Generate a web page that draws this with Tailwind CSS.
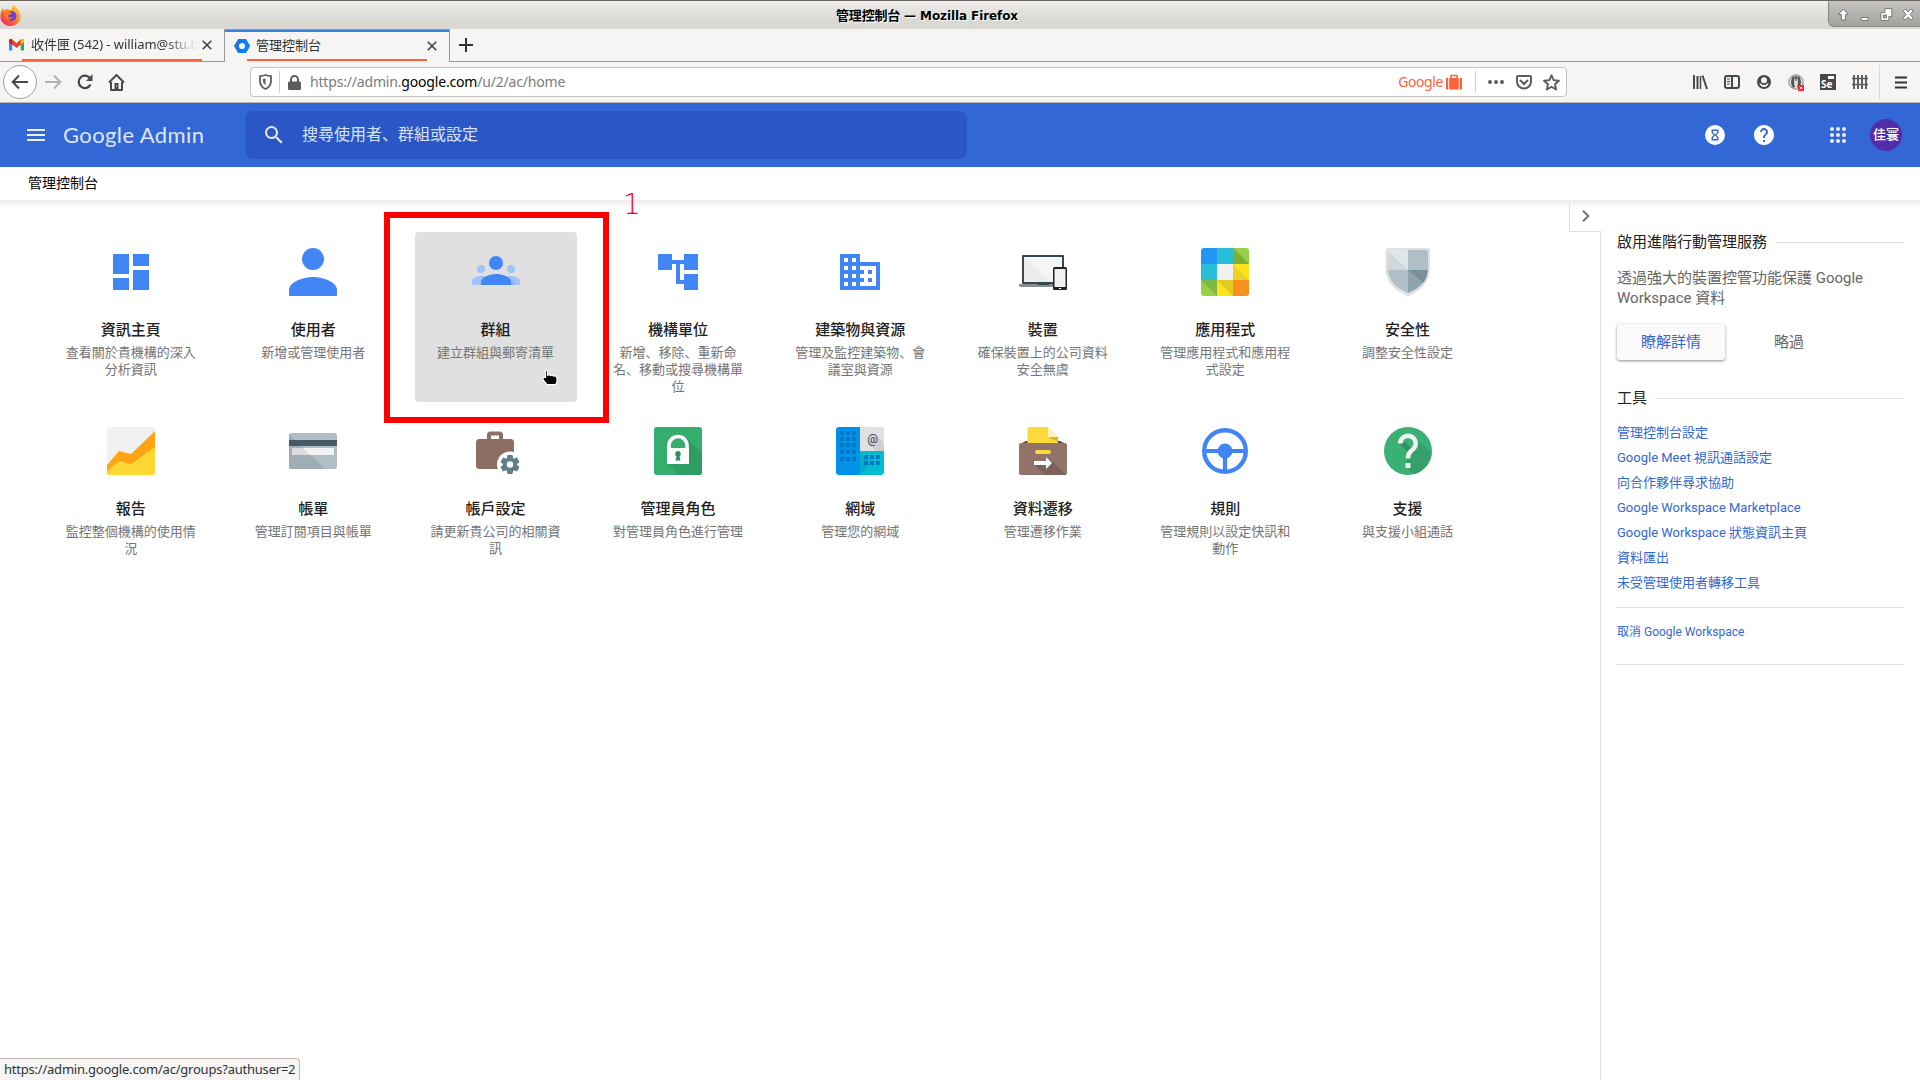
<!DOCTYPE html>
<html>
<head>
<meta charset="utf-8">
<title>管理控制台</title>
<script src="https://cdn.jsdelivr.net/npm/@tailwindcss/browser@4"></script>
</head>
<body class="relative flex h-[1080px] w-[1920px] flex-col overflow-hidden bg-white font-[Roboto,'Noto_Sans_CJK_JP',sans-serif] text-[#212121]">

<!-- Window title bar -->
<div class="flex h-[29px] shrink-0 items-stretch border-t border-[#6c6763] bg-linear-to-b from-[#f0eeec] to-[#d9d8d2] to-70%">
  <svg class="mt-[3px] h-[22px] w-[22px] shrink-0" viewBox="0 0 22 22"><defs><linearGradient id="ff" x1="1" y1="0" x2="0.2" y2="1"><stop offset="0" stop-color="#ffe14a"/><stop offset=".5" stop-color="#ff8a20"/><stop offset="1" stop-color="#f0206a"/></linearGradient></defs><path d="M14 1c1 2 3 3 5 6 3 6 1 10-1 12-4 4-11 4-15 0C0 16 0 11 1 8l2-4 1 3 2-2c2 0 3 1 5 1 1-2 1-4 3-5z" fill="url(#ff)"/><circle cx="11.500" cy="12" r="5" fill="#6c3cd6"/><path d="M5 8c3-1 5 0 7 1-1 2-3 1-4 3 1 2 4 2 5 0 0 4-6 5-8 1-1-2-1-4 0-5z" fill="#ff7a20"/></svg>
  <div class="w-[70px] shrink-0"></div>
  <div class="flex flex-1 items-center justify-center pt-[1px] text-[12px] font-bold text-black [text-shadow:1px_1px_0_#fff] font-['DejaVu_Sans','Noto_Sans_CJK_JP',sans-serif]"><span class="mr-[66px] whitespace-nowrap"><span class="text-[13px] tracking-[-0.2px]">管理控制台</span><span class="tracking-[-0.1px]"> — Mozilla Firefox</span></span></div>
  <div class="flex h-[26px] w-[92px] items-center rounded-bl-md border-b border-l border-[#8a8884] bg-linear-to-b from-[#c5c3bf] to-[#a5a39f] pl-[4px]">
    <svg class="mt-[2px] h-[22px] w-[88px]" viewBox="0 0 88 22" fill="#fff" stroke="#777" stroke-width="1"><path d="M10.500 5l5 5.500h-3v5.500h-4v-5.500h-3z"/><path d="M28.500 13.500h7v3h-7z"/><path d="M52.500 4.500h7v8h-3v4h-8v-8h4zM51 11v3h3v-3z" fill-rule="evenodd"/><path d="M71 7l2-2 3 3 3-3 2 2-3 3.500 3 3.500-2 2-3-3-3 3-2-2 3-3.500z"/></svg>
  </div>
</div>

<!-- Tab strip -->
<div class="flex h-[33px] shrink-0 bg-[#f6f5f3] text-[13px] text-[#2e3436] font-['Noto_Sans','Noto_Sans_CJK_JP',sans-serif]">
  <div class="relative flex w-[224px] items-center border-b border-[#9a9996] pl-[9px]">
    <svg class="h-[12px] w-[15px]" viewBox="0 2 16 12" preserveAspectRatio="none"><path d="M0 3.500v9c0 .6.400 1 1 1h2.500V7z" fill="#4285f4"/><path d="M12.500 7v6.500H15c.6 0 1-.4 1-1v-9z" fill="#34a853"/><path d="M0 4c0-2 2-2.500 3.500-1.400L8 6l4.500-3.400C14 1.500 16 2 16 4v1L8 11 0 5z" fill="#ea4335"/><path d="M12.500 2.600C14 1.500 16 2 16 4v1.200l-3.500 2.600z" fill="#fbbc04"/><path d="M0 4v1.200l3.500 2.600V2.600C2 1.500 0 2 0 4z" fill="#c5221f"/></svg>
    <span class="ml-[7px] w-[166px] overflow-hidden whitespace-nowrap mask-r-from-80%"><span class="tracking-[-0.05px]">收件匣 (542) - william@stu.b</span></span>
    <svg class="ml-[5px] h-[10px] w-[10px]" viewBox="0 0 10 10" stroke="#3f4547" stroke-width="1.600"><path d="M.7.700l8.600 8.600M9.300.700L.7 9.300"/></svg>
    <div class="absolute bottom-0 left-[22px] h-[2px] w-[180px] bg-[#ff6138]"></div>
  </div>
  <div class="relative flex w-[226px] items-center border-x border-t border-[#9a9996] pl-[9px]">
    <div class="absolute inset-x-0 top-0 h-[2px] bg-[#3584e4]"></div>
    <svg class="h-[16px] w-[16px]" viewBox="0 0 16 16"><path d="M4.200 1h7.600L16 8l-4.200 7H4.200L0 8z" fill="#1a73e8"/><path d="M8 1h3.800L16 8l-4.200 7H8z" fill="#0d80ff"/><circle cx="8" cy="8" r="3" fill="#fff"/></svg>
    <span class="ml-[6px] w-[166px]">管理控制台</span>
    <svg class="ml-[5px] h-[10px] w-[10px]" viewBox="0 0 10 10" stroke="#3f4547" stroke-width="1.600"><path d="M.7.700l8.600 8.600M9.300.700L.7 9.300"/></svg>
    <div class="absolute bottom-[1px] left-[22px] h-[2px] w-[180px] bg-[#ff6138]"></div>
  </div>
  <div class="flex flex-1 items-center border-b border-[#9a9996] pl-[9px]">
    <svg class="h-[14px] w-[14px]" viewBox="0 0 14 14" stroke="#2e3436" stroke-width="2"><path d="M7 0v14M0 7h14"/></svg>
  </div>
</div>

<!-- Navigation toolbar -->
<div class="flex h-[41px] shrink-0 items-center border-b border-[#bcb8b1] bg-[#f6f5f3] text-[#45494b] font-['Noto_Sans','Noto_Sans_CJK_JP',sans-serif]">
  <div class="ml-[3px] flex h-[34px] w-[34px] items-center justify-center rounded-full border border-[#a3a19d] bg-white">
    <svg class="h-[16px] w-[18px]" viewBox="0 0 18 16" fill="none" stroke="#45494b" stroke-width="2"><path d="M8 1.500L1.700 8 8 14.500M2 8h15"/></svg>
  </div>
  <svg class="ml-[7px] h-[16px] w-[18px]" viewBox="0 0 18 16" fill="none" stroke="#b3b3b1" stroke-width="2"><path d="M10 1.500L16.300 8 10 14.500M16 8H1"/></svg>
  <svg class="ml-[15px] h-[16px] w-[17px]" viewBox="0 0 17 16" fill="none" stroke="#45494b" stroke-width="2.200"><path d="M13.500 10.500A6.200 6.200 0 1 1 13 4.300"/><path d="M15.500 0v7H9z" fill="#45494b" stroke="none"/></svg>
  <svg class="ml-[14px] h-[17px] w-[17px]" viewBox="0 0 17 17"><path d="M1 8.500L8.500 1 16 8.500M3 8v8h11V8" fill="none" stroke="#45494b" stroke-width="2" stroke-linejoin="round"/><path d="M6.500 9h4v7h-4z" fill="#45494b"/><path d="M8 11.500h1v1H8z" fill="#fff"/></svg>
  <div class="ml-[125px] flex h-[30px] w-[1317px] items-center rounded-[4px] border border-[#c5c1bb] bg-white pr-[6px] text-[14px]">
    <svg class="ml-[8px] h-[16px] w-[13px] shrink-0" viewBox="0 0 13 16" fill="none" stroke="#5c5c5c" stroke-width="1.800"><path d="M1 2.200Q4 2 6.500 1 9 2 12 2.200V7q0 5.500-5.500 8Q1 12.500 1 7z"/><path d="M6.500 4.500v7Q4 9.500 4 7V5z" fill="#5c5c5c" stroke="none"/></svg>
    <div class="ml-[7px] h-[22px] w-px bg-[#cfcfcf]"></div>
    <svg class="ml-[8px] h-[15px] w-[13px]" viewBox="0 0 13 15"><path d="M3 7V4.500a3.500 3.500 0 0 1 7 0V7" fill="none" stroke="#5c5c5c" stroke-width="2"/><rect y="6.500" width="13" height="8.500" rx="1.200" fill="#5c5c5c"/></svg>
    <span class="mb-[2px] ml-[9px] tracking-[-0.18px] whitespace-nowrap text-[#7b7b7b]">https://admin.<span class="text-black">google.com</span>/u/2/ac/home</span>
    <span class="flex-1"></span>
    <span class="mb-[1px] tracking-[-0.4px] text-[#ff6138]">Google</span>
    <svg class="ml-[3px] h-[16px] w-[16px]" viewBox="0 0 16 16" fill="#ff6138"><path d="M0 4h2.200v11.500H0zM3.200 4h9.600v11.500H3.200zM13.800 4H16v11.500h-2.200z"/><path d="M5 4V1.500h6V4" fill="none" stroke="#ff6138" stroke-width="1.500"/></svg>
    <div class="ml-[13px] h-[22px] w-px bg-[#cfcfcf]"></div>
    <svg class="ml-[12px] h-[4px] w-[16px]" viewBox="0 0 16 4" fill="#5c5c5c"><circle cx="2" cy="2" r="2"/><circle cx="8" cy="2" r="2"/><circle cx="14" cy="2" r="2"/></svg>
    <svg class="ml-[12px] h-[15px] w-[16px]" viewBox="0 0 16 15" fill="none" stroke="#5c5c5c" stroke-width="2" stroke-linecap="round"><path d="M2 1h12q1 0 1 1v4.500a7 7 0 0 1-14 0V2q0-1 1-1z"/><path d="M4.500 5.500L8 9l3.500-3.500"/></svg>
    <svg class="ml-[11px] h-[17px] w-[17px]" viewBox="0 0 17 17" fill="none" stroke="#5c5c5c" stroke-width="1.900" stroke-linejoin="round"><path d="M8.500 1.300l2.200 4.800 5.200.6-3.900 3.500 1.100 5.300-4.600-2.700-4.600 2.700L5 10.200 1.100 6.700l5.200-.6z"/></svg>
  </div>
  <div class="ml-[125px] flex items-center gap-[16px]">
    <svg class="h-[16px] w-[16px]" viewBox="0 0 16 16" stroke="#45494b" stroke-width="2"><path d="M2 1v14M5.500 2v13"/><path d="M8.500 2v13" stroke-width="1.500"/><path d="M10.500 1.500l4.500 13.500"/></svg>
    <svg class="h-[16px] w-[16px]" viewBox="0 0 16 16" fill="none" stroke="#45494b" stroke-width="2"><rect x="1" y="2" width="14" height="12" rx="2"/><path d="M8 2v12"/><path d="M3 5h3M3 7.500h3M3 10h3" stroke-width="1"/></svg>
    <svg class="h-[16px] w-[16px]" viewBox="0 0 16 16"><circle cx="8" cy="8" r="7" fill="#45494b"/><circle cx="8" cy="6.200" r="3" fill="#f6f5f3"/><path d="M3.200 9.500h1.600Q6 11 8 11t3.200-1.500h1.600Q11 13 8 13T3.200 9.500z" fill="#f6f5f3"/></svg>
    <svg class="h-[17px] w-[16px]" viewBox="0 0 16 17"><circle cx="8" cy="8" r="7.200" fill="#ddd" stroke="#888"/><path d="M5 2Q1 8 5 14l2-1Q5 8 7 3zM11 2q4 6 0 12l-2-1q2-5 0-10z" fill="#555"/><path d="M7 2h2l-.5 5h-1z" fill="#555"/><path d="M10 11h6v6h-6z" fill="#e22"/><path d="M11.500 12.500l3 3m0-3l-3 3" stroke="#fff"/></svg>
    <span class="relative flex h-[16px] w-[16px] items-end bg-[#484848] pl-[1px] text-[10px] leading-[11px] font-bold text-white">Se<span class="absolute top-[2px] right-[2px] h-[3px] w-[6px] bg-white"></span></span>
    <svg class="h-[16px] w-[16px]" viewBox="0 0 16 16" stroke="#5c6062" stroke-width="2"><path d="M2 1v14M6 1v14M10 1v14M14 1v14"/><path d="M0 4.500h16M0 10.500h16" stroke-width="1.400"/></svg>
  </div>
  <div class="ml-[11px] h-[34px] w-px bg-[#d9d8d5]"></div>
  <svg class="ml-[15px] h-[13px] w-[12px]" viewBox="0 0 12 13" stroke="#2e3436" stroke-width="2"><path d="M0 1.500h12M0 6.500h12M0 11.500h12"/></svg>
</div>

<!-- Application header -->
<header class="flex h-[64px] shrink-0 items-center bg-[#3367d6] text-white">
  <svg class="ml-[27px] h-[12px] w-[18px]" viewBox="0 0 18 12" fill="#e9effb"><path d="M0 0h18v2H0zM0 5h18v2H0zM0 10h18v2H0z"/></svg>
  <div class="mb-[2px] ml-[18px] w-[182px] text-[22px] text-[#dfe8fa] font-[Lato,sans-serif]"><span class="tracking-[0.4px] whitespace-nowrap">Google Admin</span></div>
  <div class="flex h-[48px] w-[722px] items-center rounded-lg bg-[#2a56c6] text-[16px] text-[#d9e2f7]">
    <svg class="ml-[17px] h-[24px] w-[24px]" viewBox="0 0 24 24" fill="#e4ebfa"><path d="M15.500 14h-.79l-.28-.27A6.470 6.470 0 0 0 16 9.500 6.500 6.500 0 1 0 9.500 16c1.610 0 3.090-.59 4.230-1.570l.27.280v.79l5 4.990L20.490 19l-4.990-5zm-6 0C7.010 14 5 11.990 5 9.500S7.010 5 9.500 5 14 7.010 14 9.500 11.990 14 9.500 14z"/></svg>
    <span class="ml-[16px]">搜尋使用者、群組或設定</span>
  </div>
  <span class="flex-1"></span>
  <svg class="h-[20px] w-[20px]" viewBox="0 0 20 20"><circle cx="10" cy="10" r="10" fill="#fff"/><path d="M6.500 4.500h7v3.300L11.300 10l2.200 2.200v3.300h-7v-3.300L8.700 10 6.500 7.800zM8 6v1.500l2 2 2-2V6zM8 12.500V14h4v-1.500l-2-2z" fill="#3367d6" fill-rule="evenodd"/></svg>
  <svg class="ml-[29px] h-[20px] w-[20px]" viewBox="2 2 20 20" fill="#fff"><path d="M12 2C6.480 2 2 6.480 2 12s4.480 10 10 10 10-4.480 10-10S17.520 2 12 2zm1 17h-2v-2h2v2zm2.070-7.750l-.9.920C13.450 12.900 13 13.500 13 15h-2v-.5c0-1.100.450-2.100 1.170-2.830l1.240-1.260c.370-.360.590-.860.590-1.410 0-1.100-.9-2-2-2s-2 .9-2 2H8c0-2.210 1.790-4 4-4s4 1.790 4 4c0 .88-.36 1.680-.93 2.250z"/></svg>
  <svg class="ml-[56px] h-[16px] w-[16px]" viewBox="4 4 16 16" fill="#e9effb"><circle cx="6" cy="6" r="2"/><circle cx="12" cy="6" r="2"/><circle cx="18" cy="6" r="2"/><circle cx="6" cy="12" r="2"/><circle cx="12" cy="12" r="2"/><circle cx="18" cy="12" r="2"/><circle cx="6" cy="18" r="2"/><circle cx="12" cy="18" r="2"/><circle cx="18" cy="18" r="2"/></svg>
  <div class="mr-[18px] ml-[24px] flex h-[32px] w-[32px] items-center justify-center rounded-full bg-[#512da8] text-[13px] font-medium text-white">佳寰</div>
</header>

<div class="flex h-[33px] shrink-0 items-center pl-[28px] text-[14px] text-black">管理控制台</div>

<!-- Page body -->
<main class="relative flex flex-1">
  <div class="absolute inset-x-0 top-0 h-[8px] bg-linear-to-b from-[#ededed] to-white/0"></div>
  <section class="grid w-[1569px] grid-cols-[repeat(8,162px)] grid-rows-[170px_170px] gap-x-[20.4px] gap-y-[9px] pt-[32px] pl-[49.8px] text-center text-[13px] leading-[17px] text-[#757575]">
    <div class="flex flex-col items-center px-[15px] pt-[16px]">
      <svg class="h-[48px] w-[48px]" viewBox="0 0 48 48" fill="#4285f4"><path d="M6 6h16v20H6zM26 6h16v12H26zM6 30h16v12H6zM26 22h16v20H26z"/></svg>
      <h3 class="mt-[24px] mb-[4px] text-[15px] leading-[20px] font-medium text-[#212121]">資訊主頁</h3><p>查看關於貴機構的深入分析資訊</p>
    </div>
    <div class="flex flex-col items-center px-[15px] pt-[16px]">
      <svg class="h-[48px] w-[48px]" viewBox="0 0 48 48" fill="#4285f4"><circle cx="24" cy="11" r="11"/><path d="M0 48v-6c0-8 14-13 24-13s24 5 24 13v6z"/></svg>
      <h3 class="mt-[24px] mb-[4px] text-[15px] leading-[20px] font-medium text-[#212121]">使用者</h3><p>新增或管理使用者</p>
    </div>
    <div class="flex flex-col items-center rounded-[4px] bg-[#e0e0e0] px-[15px] pt-[16px]">
      <svg class="h-[48px] w-[48px]" viewBox="0 0 48 48"><g fill="#a1c2fa"><circle cx="9" cy="21" r="4"/><circle cx="39" cy="21" r="4"/><path d="M0 37v-4c0-3 5-5 9-5s9 2 9 5v4zM30 37v-4c0-3 5-5 9-5s9 2 9 5v4z"/></g><path d="M36 29l8 8h-7z" fill="#8fb0e8"/><circle cx="24" cy="15" r="7" fill="#4285f4"/><path d="M9 37v-3c0-5 9-8 15-8s15 3 15 8v3z" fill="#4285f4"/></svg>
      <h3 class="mt-[24px] mb-[4px] text-[15px] leading-[20px] font-medium text-[#212121]">群組</h3><p>建立群組與郵寄清單</p>
    </div>
    <div class="flex flex-col items-center px-[15px] pt-[16px]">
      <svg class="h-[48px] w-[48px]" viewBox="0 0 48 48" fill="#4285f4"><path d="M44 22V6H30v6H18V6H4v16h14v-6h4v20h8v6h14V26H30v6h-4V16h4v6z"/></svg>
      <h3 class="mt-[24px] mb-[4px] text-[15px] leading-[20px] font-medium text-[#212121]">機構單位</h3><p>新增、移除、重新命名、移動或搜尋機構單位</p>
    </div>
    <div class="flex flex-col items-center px-[15px] pt-[16px]">
      <svg class="h-[48px] w-[48px]" viewBox="0 0 24 24" fill="#4285f4"><path d="M12 7V3H2v18h20V7H12zM6 19H4v-2h2v2zm0-4H4v-2h2v2zm0-4H4V9h2v2zm0-4H4V5h2v2zm4 12H8v-2h2v2zm0-4H8v-2h2v2zm0-4H8V9h2v2zm0-4H8V5h2v2zm10 12h-8v-2h2v-2h-2v-2h2v-2h-2V9h8v10zm-2-8h-2v2h2v-2zm0 4h-2v2h2v-2z"/></svg>
      <h3 class="mt-[24px] mb-[4px] text-[15px] leading-[20px] font-medium text-[#212121]">建築物與資源</h3><p>管理及監控建築物、會議室與資源</p>
    </div>
    <div class="flex flex-col items-center px-[15px] pt-[16px]">
      <svg class="h-[48px] w-[48px]" viewBox="0 0 48 48"><rect x="3" y="7" width="42" height="29" rx="1" fill="#37474f"/><path d="M5 9h38v25H5z" fill="#ebebeb"/><path d="M5 9l25 25h13V9z" fill="#f5f5f5"/><path d="M0 36h36v3H1q-1 0-1-3z" fill="#8a8a8a"/><path d="M19 35h11v2H19z" fill="#37474f"/><rect x="34" y="19" width="14" height="23" rx="1.500" fill="#212121"/><path d="M35.500 21h11v18h-11z" fill="#f0f0f0"/><path d="M40 40h2v1h-2z" fill="#fff"/></svg>
      <h3 class="mt-[24px] mb-[4px] text-[15px] leading-[20px] font-medium text-[#212121]">裝置</h3><p>確保裝置上的公司資料安全無虞</p>
    </div>
    <div class="flex flex-col items-center px-[15px] pt-[16px]">
      <div class="grid h-[48px] w-[48px] grid-cols-3 overflow-hidden rounded-[3px]"><i class="bg-[#2196f3]"></i><i class="bg-[#29bfd9]"></i><i class="bg-linear-to-tr from-[#7cab36] from-48% to-[#97cf49] to-52%"></i><i class="bg-[#29bfd9]"></i><i class="bg-[#f1f1f1]"></i><i class="bg-linear-to-tr from-[#f0d322] from-49% to-[#fbe31d] to-51%"></i><i class="bg-linear-to-tr from-[#97cf49] from-49% to-[#80b942] to-51%"></i><i class="bg-linear-to-tr from-[#fbe31d] from-49% to-[#e2cb21] to-51%"></i><i class="bg-[#f7911d]"></i></div>
      <h3 class="mt-[24px] mb-[4px] text-[15px] leading-[20px] font-medium text-[#212121]">應用程式</h3><p>管理應用程式和應用程式設定</p>
    </div>
    <div class="flex flex-col items-center px-[15px] pt-[16px]">
      <svg class="h-[48px] w-[48px]" viewBox="0 0 48 48"><path d="M4 0h40q2 0 2 2v18c0 14-9 23-22 28C11 43 1.500 34 1.500 20V2q0-2 2.500-2z" fill="#e0e0e0"/><path d="M4 22V5q0-3 3-3h17v20z" fill="#cfd8dc"/><path d="M4 3l20 19V2H6z" fill="#e0e5e8"/><path d="M24 2h17q3 0 3 3v17H24zM4 22h20v23C12 40 5 33 4 22z" fill="#b0bec5"/><path d="M24 22h20C43 33 35 41 24 45z" fill="#90a4ae"/><path d="M24 22h19.500c0 5-2 10-4 13z" fill="#78909c"/></svg>
      <h3 class="mt-[24px] mb-[4px] text-[15px] leading-[20px] font-medium text-[#212121]">安全性</h3><p>調整安全性設定</p>
    </div>

    <div class="flex flex-col items-center px-[15px] pt-[16px]">
      <svg class="h-[48px] w-[48px]" viewBox="0 0 48 48"><rect width="48" height="48" rx="3" fill="#f1f1f1"/><path d="M0 38l12-14 12 3L48 4v41q0 3-3 3H3q-3 0-3-3z" fill="#ffa412"/><path d="M0 44l12-10 12 3 24-17v25q0 3-3 3H3q-3 0-3-3z" fill="#fdd835"/></svg>
      <h3 class="mt-[24px] mb-[4px] text-[15px] leading-[20px] font-medium text-[#212121]">報告</h3><p>監控整個機構的使用情況</p>
    </div>
    <div class="flex flex-col items-center px-[15px] pt-[16px]">
      <svg class="h-[48px] w-[48px]" viewBox="0 0 48 48"><rect y="6" width="48" height="36" rx="2.500" fill="#b0bec5"/><path d="M0 7l36 35H2q-2 0-2-2z" fill="#9fadb4"/><path d="M0 13h48v6H0z" fill="#455a64"/><path d="M3 21h42v7H3z" fill="#f2f2f2"/><path d="M3 21h11l7 7H3z" fill="#dcdcdc"/></svg>
      <h3 class="mt-[24px] mb-[4px] text-[15px] leading-[20px] font-medium text-[#212121]">帳單</h3><p>管理訂閱項目與帳單</p>
    </div>
    <div class="flex flex-col items-center px-[15px] pt-[16px]">
      <svg class="h-[48px] w-[48px]" viewBox="0 0 48 48"><path d="M17 14V8q0-1.500 1.500-1.500h9Q29 6.500 29 8v6" fill="none" stroke="#8d6e63" stroke-width="4"/><rect x="4" y="12" width="38" height="30" rx="3.500" fill="#8d6e63"/><circle cx="38" cy="37.500" r="13" fill="#fff"/><g fill="#607d8b"><circle cx="38" cy="37.500" r="7"/><path id="tooth" d="M35.500 28h5l1 5h-7z"/><use href="#tooth" transform="rotate(60 38 37.500)"/><use href="#tooth" transform="rotate(120 38 37.500)"/><use href="#tooth" transform="rotate(180 38 37.500)"/><use href="#tooth" transform="rotate(240 38 37.500)"/><use href="#tooth" transform="rotate(300 38 37.500)"/></g><circle cx="38" cy="37.500" r="3.200" fill="#fff"/></svg>
      <h3 class="mt-[24px] mb-[4px] text-[15px] leading-[20px] font-medium text-[#212121]">帳戶設定</h3><p>請更新貴公司的相關資訊</p>
    </div>
    <div class="flex flex-col items-center px-[15px] pt-[16px]">
      <svg class="h-[48px] w-[48px]" viewBox="0 0 48 48"><rect width="48" height="48" rx="3" fill="#34ad6d"/><path d="M32 10l16 16v19q0 3-3 3H25L14 36z" fill="#2f9c63"/><path d="M15 22v-3.500a9 9 0 0 1 18 0V22" fill="#34ad6d" stroke="#fff" stroke-width="3.600"/><path d="M13 21h22v16H13z" fill="#fff"/><path d="M24 24a3 3 0 0 1 1.500 5.500l1 4h-5l1-4A3 3 0 0 1 24 24z" fill="#2d8f59"/></svg>
      <h3 class="mt-[24px] mb-[4px] text-[15px] leading-[20px] font-medium text-[#212121]">管理員角色</h3><p>對管理員角色進行管理</p>
    </div>
    <div class="flex flex-col items-center px-[15px] pt-[16px]">
      <div class="relative h-[48px] w-[48px]"><svg class="h-[48px] w-[48px]" viewBox="0 0 48 48"><path d="M3 0h21v48H3q-3 0-3-3V3q0-3 3-3z" fill="#0091ea"/><path d="M24 0h21q3 0 3 3v21H24z" fill="#e1e1e1"/><path d="M41 9l7 7v8h-8l-8-7z" fill="#cfcfcf"/><path d="M24 24h24v21q0 3-3 3H24z" fill="#00bcd4"/><path d="M24 25l12 12-12 9z" fill="#00acc8"/><g fill="#0277bd"><path id="w3" d="M4 4h4v4H4zM10 4h4v4h-4zM16 4h4v4h-4z"/><use href="#w3" y="6"/><use href="#w3" y="12"/><use href="#w3" y="18.500"/><use href="#w3" y="26"/><use href="#w3" x="24" y="24"/><use href="#w3" x="24" y="30"/></g></svg><span class="absolute top-[4px] left-[31px] text-[12px] leading-[16px] font-medium text-[#455a64] font-[Roboto,sans-serif]">@</span></div>
      <h3 class="mt-[24px] mb-[4px] text-[15px] leading-[20px] font-medium text-[#212121]">網域</h3><p>管理您的網域</p>
    </div>
    <div class="flex flex-col items-center px-[15px] pt-[16px]">
      <svg class="h-[48px] w-[48px]" viewBox="0 0 48 48"><path d="M3 16l4-2h34l4 2z" fill="#5d4037"/><path d="M8.500 2q0-2 2-2H29l10 10v6.500H8.500z" fill="#fdd93b"/><path d="M29 10h10v5z" fill="#e0b42a"/><path d="M29 0l10 10H29z" fill="#fff4b8"/><path d="M2 16h44q2 0 2 2v28q0 2-2 2H2q-2 0-2-2V18q0-2 2-2z" fill="#92736a"/><path d="M32 33l15 15H26L15 38z" fill="#7d625a"/><rect x="16" y="23" width="16" height="4" rx="2" fill="#fdd93b"/><path d="M15 34h12v-4l6 6-6 6v-4H15z" fill="#fff"/></svg>
      <h3 class="mt-[24px] mb-[4px] text-[15px] leading-[20px] font-medium text-[#212121]">資料遷移</h3><p>管理遷移作業</p>
    </div>
    <div class="flex flex-col items-center px-[15px] pt-[16px]">
      <svg class="h-[48px] w-[48px]" viewBox="0 0 48 48" fill="none" stroke="#4285f4"><circle cx="24" cy="24" r="20.800" stroke-width="4.400"/><circle cx="24" cy="24" r="7.500" fill="#4285f4" stroke="none"/><path d="M4 24h40M24 24v20" stroke-width="4.200"/></svg>
      <h3 class="mt-[24px] mb-[4px] text-[15px] leading-[20px] font-medium text-[#212121]">規則</h3><p>管理規則以設定快訊和動作</p>
    </div>
    <div class="flex flex-col items-center px-[15px] pt-[16px]">
      <svg class="h-[48px] w-[48px]" viewBox="0 0 48 48"><circle cx="24" cy="24" r="24" fill="#3bb075"/><path d="M32 11l15.500 15.500A24 24 0 0 1 30 47.200L22 40l2-12z" fill="#35a069"/><path d="M15.500 17l9 9 2-5-5-6z" fill="#309060"/><path d="M16.300 16.500a7.700 7.700 0 1 1 12.500 6c-3 2.400-4.800 4-4.800 9" fill="none" stroke="#f1f1f1" stroke-width="4.500"/><path d="M21.500 36h5v5h-5z" fill="#f1f1f1"/></svg>
      <h3 class="mt-[24px] mb-[4px] text-[15px] leading-[20px] font-medium text-[#212121]">支援</h3><p>與支援小組通話</p>
    </div>
  </section>

  <div class="flex h-[32px] w-[31px] items-center justify-center border-b border-l border-[#dedede]">
    <svg class="ml-[1px] h-[12px] w-[8px]" viewBox="0 0 8 12" fill="none" stroke="#757575" stroke-width="2"><path d="M1 .7L6.300 6 1 11.300"/></svg>
  </div>

  <aside class="mt-[31px] flex flex-1 flex-col border-l border-[#dedede] pr-[16px] pl-[16px] text-[15px]">
    <h2 class="flex h-[22px] items-center gap-[8px]">啟用進階行動管理服務<span class="h-px flex-1 bg-[#dedede]"></span></h2>
    <p class="mt-[15px] leading-[20px] text-[#666]">透過強大的裝置控管功能保護 Google Workspace 資料</p>
    <div class="mt-[16px] flex h-[36px] items-center">
      <div class="flex h-[36px] w-[108px] items-center justify-center rounded-[3px] bg-[#fafafa] text-[#3367d6] shadow-[0_1px_3px_rgba(0,0,0,0.45)]">瞭解詳情</div>
      <div class="ml-[49px] text-[#666]">略過</div>
    </div>
    <h2 class="mt-[27px] flex h-[22px] items-center gap-[8px]">工具<span class="h-px flex-1 bg-[#dedede]"></span></h2>
    <nav class="mt-[11px] border-b border-[#dedede] pb-[12px] text-[13px] leading-[25px] text-[#3367d6]">
      <div>管理控制台設定</div><div>Google Meet 視訊通話設定</div><div>向合作夥伴尋求協助</div><div>Google Workspace Marketplace</div><div>Google Workspace 狀態資訊主頁</div><div>資料匯出</div><div>未受管理使用者轉移工具</div>
    </nav>
    <div class="flex h-[57px] items-center border-b border-[#dedede] pb-[8px] text-[12px] text-[#3367d6]">取消 Google Workspace</div>
  </aside>
</main>

<!-- Pointer, annotation and link status overlay -->
<svg class="absolute top-[369px] left-[541px] h-[17px] w-[17px]" viewBox="0 0 17 17"><path d="M4.500 2Q5.500.5 6.500 2v4.500l1.500-1 1.500 1 1.500-.5 1.500 1 1.500-.3 2 2v4l-1.500 3H6l-4-5V8.500h2.500z" fill="#000" stroke="#fff" stroke-width="1.200"/></svg>
<div class="absolute top-[212px] left-[384px] h-[211px] w-[225px] border-[6px] border-[#f00]"></div>
<div class="absolute top-[185px] left-[623px] text-[28px] leading-[40px] font-extralight text-[#f00] font-['DejaVu_Sans_Light','DejaVu_Sans',sans-serif]">1</div>
<div class="absolute bottom-0 left-0 flex h-[22px] w-[300px] items-center rounded-tr-[4px] border-t border-r border-[#c0b8b0] bg-[#f6f5f3] pl-[4px] text-[13px] text-[#2e3436] font-['Noto_Sans',sans-serif]"><span class="tracking-[-0.22px] whitespace-nowrap">https://admin.google.com/ac/groups?authuser=2</span></div>
</body>
</html>
